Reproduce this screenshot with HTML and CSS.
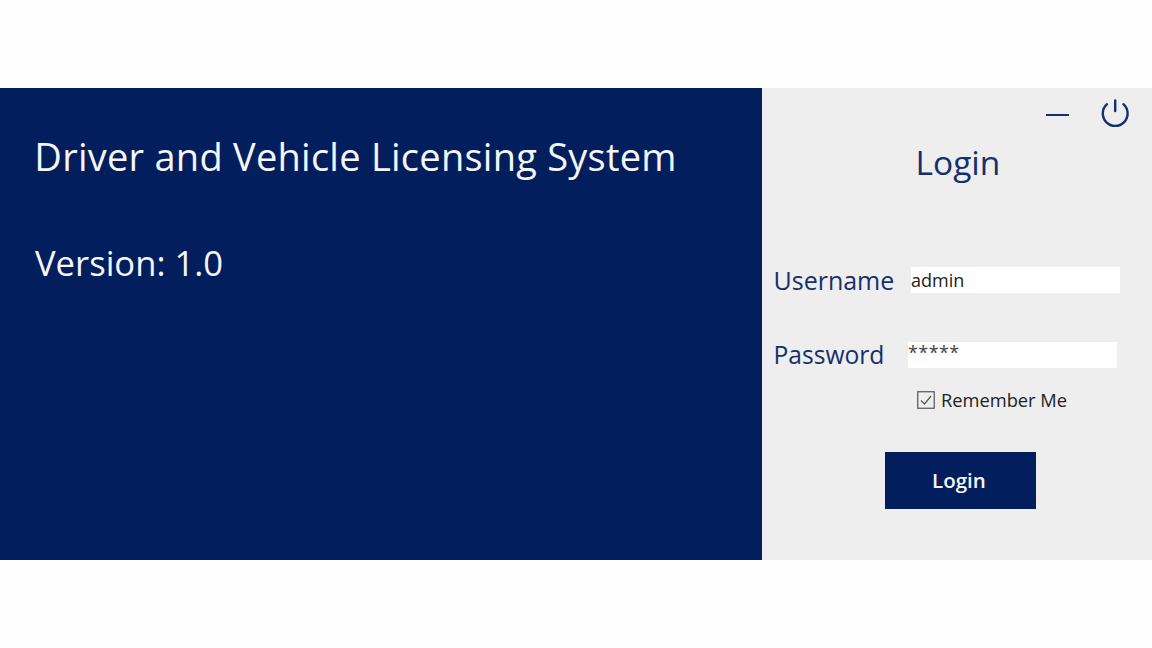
FILE: index.html
```html
<!DOCTYPE html>
<html lang="en">
<head>
<meta charset="utf-8">
<title>Driver and Vehicle Licensing System</title>
<link rel="stylesheet" href="styles.css">
</head>
<body>
<main class="window">
  <section class="brand">
    <h1 class="brand-title">Driver and Vehicle Licensing System</h1>
    <p class="brand-version">Version: 1.0</p>
  </section>
  <section class="panel">
    <div class="controls">
      <span class="minimize"></span>
      <svg class="power" viewBox="0 0 30 30" width="30" height="30" aria-hidden="true">
        <path d="M7 6.2A12.4 12.4 0 1 0 23.4 6.2" />
        <path d="M15.2 2.5v10.5" />
      </svg>
    </div>
    <h2 class="panel-title">Login</h2>
    <div class="field field-user">
      <label class="field-label">Username</label>
      <div class="input">admin</div>
    </div>
    <div class="field field-pass">
      <label class="field-label">Password</label>
      <div class="input input-secret">*****</div>
    </div>
    <div class="remember">
      <svg class="check" viewBox="0 0 18 18" width="18" height="18" aria-hidden="true">
        <rect x="0.75" y="0.75" width="16.5" height="16.5" />
        <path d="M4 9.5l3.5 3.5 6.5-8" />
      </svg>
      <span>Remember Me</span>
    </div>
    <button class="submit" type="button">Login</button>
  </section>
</main>
</body>
</html>
```

FILE: styles.css
```css
* { box-sizing: border-box; }

html, body { margin: 0; height: 100%; background: #fefefe; }

body {
  padding-top: 88px;
  overflow: hidden;
  font-family: "Open Sans", "Noto Sans", sans-serif;
}

.window {
  display: flex;
  height: 472px;
}

.brand {
  width: 762px;
  flex: none;
  background: #031e5c;
  color: #f4f6fa;
  padding: 42px 0 0 35px;
}

.brand-title {
  margin: 0 0 0 -0.7px;
  font-size: 38px;
  line-height: 52px;
  font-weight: 400;
  letter-spacing: 0.25px;
  white-space: nowrap;
}

.brand-version {
  margin: 55px 0 0;
  font-size: 34.6px;
  line-height: 52px;
}

.panel {
  flex: 1;
  background: #eeeeee;
  display: flex;
  flex-direction: column;
  color: #15306b;
}

.controls {
  display: flex;
  align-items: center;
  justify-content: flex-end;
  gap: 31px;
  height: 30px;
  margin-top: 10px;
  padding-right: 22px;
}

.minimize {
  width: 23px;
  height: 2px;
  margin-top: 4px;
  background: #15306b;
}

.power { fill: none; stroke: #15306b; stroke-width: 2.4; stroke-linecap: round; }

.panel-title {
  margin: 12px 0 0;
  padding-left: 153.5px;
  font-size: 33.5px;
  line-height: 44px;
  font-weight: 400;
}

.field {
  display: flex;
  align-items: center;
  height: 26px;
  padding-left: 11.5px;
}

.field-user { margin-top: 83px; }
.field-pass { margin-top: 49px; }

.field-label {
  width: 137.5px;
  font-size: 25px;
  line-height: 26px;
  white-space: nowrap;
}

.field-pass .field-label { width: 134.5px; font-size: 24.6px; }

.input {
  width: 209px;
  height: 26px;
  background: #fff;
  color: #222;
  font-size: 18px;
  line-height: 26px;
}

.input-secret { line-height: 20px; letter-spacing: 0.4px; color: #444; }

.remember {
  display: flex;
  align-items: center;
  gap: 6px;
  margin: 23px 0 0 155px;
  font-size: 18.3px;
  line-height: 18px;
  color: #222;
}

.check { flex: none; fill: none; stroke: #555; stroke-width: 1.2; }

.submit {
  align-self: flex-start;
  width: 151px;
  height: 57px;
  margin: 43px 0 0 123px;
  border: 0;
  padding: 0 3px 2px 0;
  background: #031e5c;
  color: #f4f6fa;
  font: 600 20.5px "Open Sans", "Noto Sans", sans-serif;
}
```
